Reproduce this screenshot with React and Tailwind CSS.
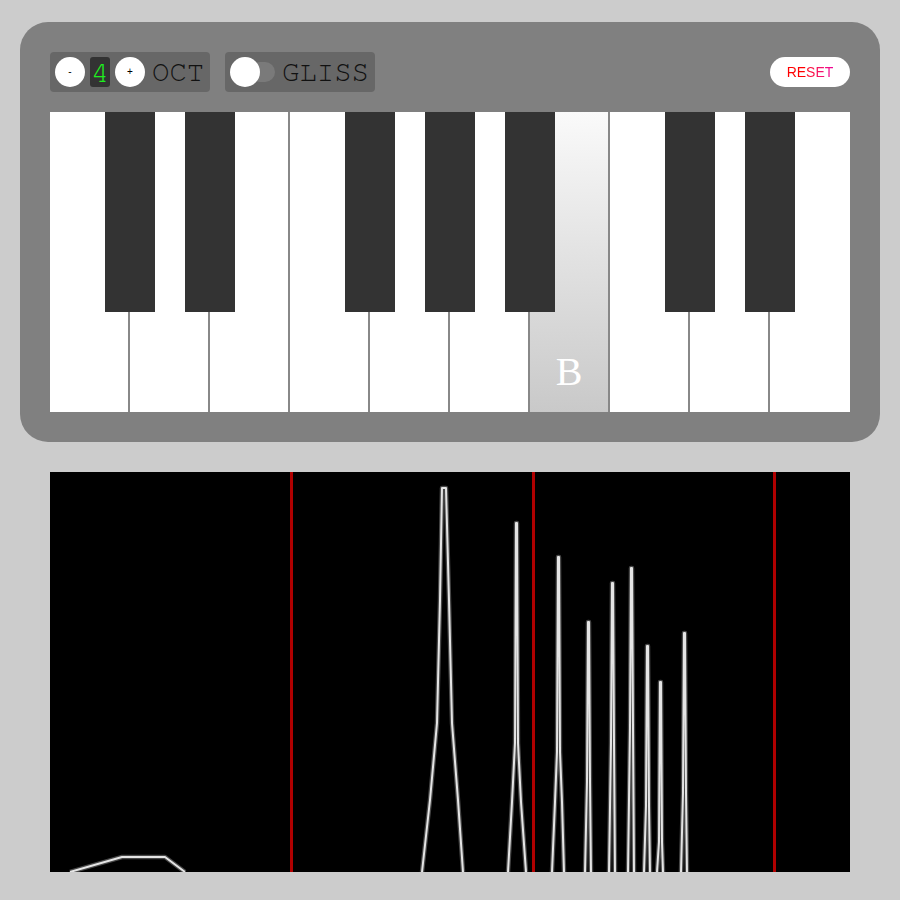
import React from "react";

const WHITE_KEYS = ["C", "D", "E", "F", "G", "A", "B", "C", "D", "E"];
const BLACK_KEY_LEFTS = [55, 135, 295, 375, 455, 615, 695];
const PRESSED = 6;

const RED_LINES = [241, 483, 724];

// spectrum traces, canvas coords (800x400)
const spikes = [
  [538, 150],
  [562, 111],
  [581, 96],
  [597, 174],
  [610, 210],
  [634, 161],
];

const traces = [
  "20,400 72,385 115,385 135,400",
  "372,400 380,328 387,251 390,128 392,16 396,16 399,128 402,251 408,328 413,400",
  "458,400 462,330 465,271 466,51 467,51 468,271 471,330 476,400",
  "502,400 505,330 507,280 508,85 509,85 510,280 512,330 514,400",
  ...spikes.map(
    ([x, y]) =>
      `${x - 3},400 ${x - 1},${y + 160} ${x},${y} ${x + 1},${y} ${x + 2},${y + 160} ${x + 3},400`
  ),
];

const mono = "font-['Nimbus_Mono_PS','FreeMono','Courier','Liberation_Mono',monospace]";

function RoundButton({ label }) {
  return (
    <button className="w-[30px] h-[30px] rounded-full bg-white flex items-center justify-center text-[10px] leading-none text-black font-['Liberation_Sans',sans-serif]">
      {label}
    </button>
  );
}

function Controls() {
  return (
    <div className="flex items-center h-10">
      <div className="flex items-center gap-[5px] h-10 px-[5px] bg-[#676767] rounded-[4px] w-[160px]">
        <RoundButton label="-" />
        <div
          className={`w-5 h-[30px] bg-[#333] rounded-[3px] flex items-center justify-center text-[31px] leading-none text-[#1ef01e] ${mono}`}
        >
          4
        </div>
        <RoundButton label="+" />
        <span className={`ml-[2px] text-[29px] leading-none text-[#111] ${mono}`}>
          OCT
        </span>
      </div>
      <div className="ml-[15px] flex items-center h-10 px-[5px] bg-[#676767] rounded-[4px] w-[150px]">
        <div className="relative w-[45px] h-[30px] flex items-center">
          <div className="absolute left-[20px] w-[25px] h-5 rounded-full bg-[#7a7a7a]" />
          <div className="relative w-[30px] h-[30px] rounded-full bg-white" />
        </div>
        <span className={`ml-[7px] text-[29px] leading-none text-[#111] ${mono}`}>
          GLISS
        </span>
      </div>
      <button className="ml-auto w-20 h-[30px] rounded-full bg-white flex items-center justify-center">
        <span className="text-[14px] leading-none font-['Liberation_Sans',sans-serif] bg-gradient-to-r from-[#ff0000] from-40% to-[#ee0099] bg-clip-text text-transparent">
          RESET
        </span>
      </button>
    </div>
  );
}

function Keyboard() {
  return (
    <div className="relative mt-5 h-[300px] flex">
      {WHITE_KEYS.map((note, i) => (
        <div
          key={i}
          className={`w-20 shrink-0 h-full flex items-end justify-center pb-5 ${
            i < WHITE_KEYS.length - 1 ? "border-r-2 border-[#888]" : ""
          } ${
            i === PRESSED
              ? "bg-gradient-to-b from-[#fafafa] to-[#c9c9c9]"
              : "bg-white"
          }`}
        >
          {i === PRESSED && (
            <span className="text-[40px] leading-none text-white font-['Liberation_Serif',serif]">
              {note}
            </span>
          )}
        </div>
      ))}
      {BLACK_KEY_LEFTS.map((left) => (
        <div
          key={left}
          className="absolute top-0 w-[50px] h-[200px] bg-[#333]"
          style={{ left }}
        />
      ))}
    </div>
  );
}

function Spectrum() {
  return (
    <div className="mt-[30px] mx-[30px] h-[400px] bg-black">
      <svg width="800" height="400" viewBox="0 0 800 400" className="block">
        {RED_LINES.map((x) => (
          <line
            key={x}
            x1={x + 0.5}
            y1="0"
            x2={x + 0.5}
            y2="400"
            stroke="#b00000"
            strokeWidth="3"
          />
        ))}
        {traces.map((pts, i) => (
          <g key={i} fill="none" strokeLinejoin="round">
            <polyline points={pts} stroke="#777" strokeWidth="4.5" opacity="0.6" />
            <polyline points={pts} stroke="#e4e4e4" strokeWidth="2" />
          </g>
        ))}
      </svg>
    </div>
  );
}

export default function App() {
  return (
    <div className="w-[900px] h-[900px] bg-[#cccccc] pt-[22px] px-5 overflow-hidden">
      <div className="bg-[#808080] rounded-[28px] p-[30px]">
        <Controls />
        <Keyboard />
      </div>
      <Spectrum />
    </div>
  );
}
